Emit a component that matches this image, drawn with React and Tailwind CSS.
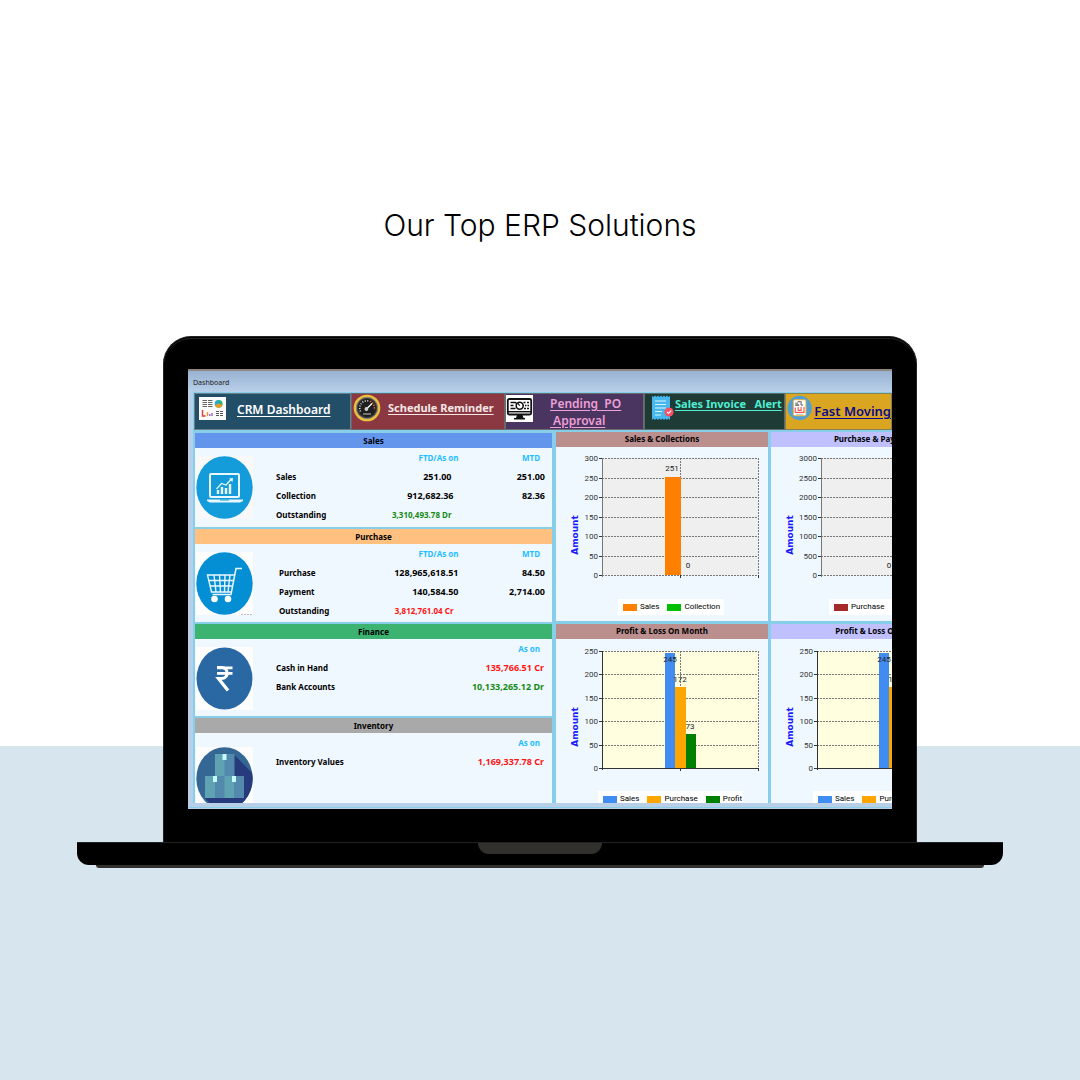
import React from "react";

const NOTO = "font-['Noto_Sans','Open_Sans',sans-serif]";

function ReportIcon() {
  return (
    <svg width="27" height="23" viewBox="0 0 27 23" aria-hidden="true">
      <rect width="27" height="23" fill="#fafafa" />
      <path d="M3.500 3.500h4.500M9 3.500h4.500M3.500 5.500h4.500M9 5.500h4.500M3.500 7.500h4.500M9 7.500h4.500M3.500 9.500h4.500M9 9.500h4.500" stroke="#666" strokeWidth="1" />
      <circle cx="19.700" cy="6.800" r="3.900" fill="#2bb673" />
      <path d="M19.700 6.800V2.900a3.900 3.900 0 0 0-3.700 5.200z" fill="#27a9e1" />
      <path d="M19.700 6.800L16 8a3.900 3.900 0 0 0 7.400 0z" fill="#f7941d" />
      <path d="M3.500 13v6h3" stroke="#e0393e" strokeWidth="1.400" fill="none" />
      <path d="M8.500 15v4" stroke="#f7941d" strokeWidth="1.500" />
      <path d="M10.800 17v2M13 16v3" stroke="#8a5bd0" strokeWidth="1.300" />
      <path d="M17 14.500h3M17 16.500h3M17 18.500h3M21 14.500h3M21 16.500h3M21 18.500h3" stroke="#555" strokeWidth="1.200" />
    </svg>
  );
}

function GaugeIcon() {
  return (
    <svg width="28" height="28" viewBox="0 0 28 28" aria-hidden="true">
      <circle cx="14" cy="14" r="13.300" fill="#edc23c" />
      <circle cx="14" cy="14" r="10.700" fill="#3a3a3a" stroke="#8b8473" strokeWidth="1" />
      <circle cx="14" cy="14" r="9" fill="#1f1f1f" />
      <path d="M7.500 17.500A7.400 7.400 0 0 1 16 7" fill="none" stroke="#ddd" strokeWidth="1.600" strokeDasharray="1 1.5" />
      <path d="M17 7.200a7.400 7.400 0 0 1 4.200 8.600" fill="none" stroke="#d9604a" strokeWidth="1.600" strokeDasharray="1.4 1.1" />
      <path d="M13 15.500L19 9.500" stroke="#fff" strokeWidth="1.300" />
      <circle cx="13.400" cy="15" r="1.900" fill="#cfcfcf" />
      <path d="M10 20h8" stroke="#aaa" strokeWidth="1.200" />
    </svg>
  );
}

function MonitorIcon() {
  return (
    <svg width="27" height="27" viewBox="0 0 27 27" aria-hidden="true">
      <rect width="27" height="27" fill="#fff" />
      <rect x="1.800" y="4" width="23.400" height="15.500" rx="1.500" fill="none" stroke="#111" strokeWidth="1.800" />
      <path d="M2 16.700h23" stroke="#111" strokeWidth="1.400" />
      <path d="M4.500 7.500h5l1.500 1.500M4.500 10.500h3M4.500 13.500h5M17.500 7.500h2M21 7.500h2M19 10.500h1.500M21.500 10.500h1.500M18 13.500h2M21 13.500h2" stroke="#111" strokeWidth="1.400" fill="none" />
      <circle cx="13.700" cy="10.700" r="3.500" fill="#fff" stroke="#111" strokeWidth="1.600" />
      <path d="M13.700 10.700l-2-2.500" stroke="#111" strokeWidth="1.200" />
      <path d="M11 20h5.500l1 3h-7.500z" fill="#111" />
      <path d="M8 23.700h11" stroke="#111" strokeWidth="1.600" />
    </svg>
  );
}

function InvoiceIcon() {
  return (
    <svg width="24" height="26" viewBox="0 0 24 26" aria-hidden="true">
      <path d="M1 1l1.500 1L4 .500 5.500 2 7 .500 8.500 2 10 .500 11.500 2 13 .500 14.500 2 16 .500 17.500 2 19 1v24l-1.500-1.500L16 25l-1.500-1.500L13 25l-1.500-1.500L10 25l-1.500-1.500L7 25l-1.500-1.500L4 25l-1.500-1.500L1 25z" fill="#46b8ee" />
      <path d="M4 6h11M4 9.500h11M4 13h11M4 16.500h7M4 20h6" stroke="#d9f3ff" strokeWidth="1.200" />
      <circle cx="18" cy="17" r="4.600" fill="#fb4f67" />
      <path d="M16 17l1.500 1.500 2.700-2.800" stroke="#fff" strokeWidth="1.200" fill="none" />
    </svg>
  );
}

function PageIcon() {
  return (
    <svg width="26" height="26" viewBox="0 0 26 26" aria-hidden="true">
      <circle cx="13" cy="13" r="12.500" fill="#4f9fd6" />
      <rect x="6.500" y="4.500" width="13" height="16.500" rx="1.500" fill="#fff" stroke="#f0b429" strokeWidth="1" />
      <path d="M11 6.500h3M14.500 6v4h2M8.500 8h3" stroke="#555" strokeWidth="1" fill="none" />
      <path d="M8.500 10h4" stroke="#333" strokeWidth="1.200" />
      <path d="M8.500 12.500v5h9v-5.500M11.500 12v3.500h3V12" stroke="#ee5a55" strokeWidth="1.200" fill="none" />
      <path d="M9 19.500h8" stroke="#bbb" strokeWidth="1" />
    </svg>
  );
}

function LaptopBadge() {
  return (
    <svg width="57" height="63" viewBox="0 0 57 63" aria-hidden="true">
      <rect width="57" height="63" fill="#f8f8f8" />
      <ellipse cx="28.500" cy="31.500" rx="28.200" ry="31.300" fill="#149bd9" />
      <rect x="14" y="18" width="29" height="23" rx="1" fill="none" stroke="#e9f7ff" strokeWidth="2" />
      <path d="M11 43.500h36v1.500l-3 1.500H14l-3-1.500z" fill="#e9f7ff" />
      <path d="M24 44h9" stroke="#149bd9" strokeWidth="1" />
      <path d="M22 38v-4M26 38v-7M30 38v-6M34 38V28" stroke="#e9f7ff" strokeWidth="2.400" />
      <path d="M20.500 33l5-5.500 4.500 1.500 5.500-6" stroke="#e9f7ff" strokeWidth="1.200" fill="none" />
      <path d="M33 22.500l4-.500-.500 4z" fill="#e9f7ff" />
    </svg>
  );
}

function CartBadge() {
  return (
    <svg width="57" height="63" viewBox="0 0 57 63" aria-hidden="true">
      <rect width="57" height="63" fill="#fdfdfd" />
      <ellipse cx="28.500" cy="31.500" rx="28.200" ry="31.300" fill="#048ed4" />
      <path d="M46 16.500h-6L35 42.500H16.500" stroke="#eaf7ff" strokeWidth="1.500" fill="none" />
      <path d="M38.500 23H11.500l4 17H35.500M12.500 28.500h25M14 34h22.500M18 23l2 17M23.500 23l1 17M29 23l-.5 17M34 23l-2 17" stroke="#eaf7ff" strokeWidth="1.400" fill="none" />
      <circle cx="18.500" cy="47" r="3.300" fill="#fff" />
      <circle cx="32" cy="47" r="3.300" fill="#fff" />
      <path d="M45 62.500h12" stroke="#bbb" strokeWidth="1" strokeDasharray="2 1" />
    </svg>
  );
}

function RupeeBadge() {
  return (
    <svg width="57" height="63" viewBox="0 0 57 63" aria-hidden="true">
      <rect width="57" height="63" fill="#fdfdfd" />
      <ellipse cx="28.500" cy="31.500" rx="28" ry="31" fill="#2968a3" />
      <path d="M21 20.800h15.500M21 26.300h15.500" stroke="#fff" strokeWidth="2.800" />
      <path d="M21 20.500h4.500c7.500 0 7.500 11 0 11h-3L32 43.500" stroke="#fff" strokeWidth="3.200" fill="none" />
    </svg>
  );
}

function BoxesBadge() {
  return (
    <svg width="57" height="63" viewBox="0 0 57 63" aria-hidden="true">
      <defs>
        <clipPath id="boxes-disc">
          <ellipse cx="28.500" cy="31.500" rx="28.200" ry="31.300" />
        </clipPath>
      </defs>
      <rect width="57" height="63" fill="#fdfdfd" />
      <g clipPath="url(#boxes-disc)">
        <rect width="57" height="63" fill="#356795" />
        <path d="M38.500 8L57 27v36H20L9 51z" fill="#263a7c" />
        <rect x="19" y="7" width="10" height="22" fill="#5fa3b3" />
        <rect x="28.500" y="7" width="10" height="22" fill="#5389ac" />
        <rect x="9" y="29" width="10" height="22" fill="#5fa3b3" />
        <rect x="19" y="29" width="10" height="22" fill="#5389ac" />
        <rect x="28.500" y="29" width="10" height="22" fill="#5fa3b3" />
        <rect x="38" y="29" width="10" height="22" fill="#5389ac" />
        <path d="M26.500 7h4v6h-4zM17 29h4v6h-4zM36 29h4v6h-4z" fill="#c5fbff" />
      </g>
    </svg>
  );
}

function Panel({ title, headClass, bodyClass, icon, iconClass, children }) {
  return (
    <section className="bg-[#f0f8ff]">
      <h2 className={`h-[15px] text-center text-[8px] leading-[15px] font-bold text-black ${headClass}`}>{title}</h2>
      <div className={`flex pr-[7px] pl-px ${bodyClass}`}>
        <div className={`mr-[22px] w-[58px] shrink-0 ${iconClass}`}>{icon}</div>
        {children}
      </div>
    </section>
  );
}

function Figures({ heads, rows, indent = "" }) {
  return (
    <table className="w-full table-fixed self-start text-[9px] leading-[19px] font-bold">
      <thead>
        <tr className="text-[8px] text-[#1fbdff]">
          <td className="w-[96px] p-0" />
          {heads.map((h) => (
            <th key={h} scope="col" className={`p-0 text-right font-bold whitespace-nowrap ${h === "FTD/As on" ? "" : "pr-[5px]"}`}>{h}</th>
          ))}
        </tr>
      </thead>
      <tbody>
        {rows.map((r) => (
          <tr key={r.label}>
            <th scope="row" className={`p-0 text-left text-[8px] font-bold whitespace-nowrap text-black ${indent}`}>{r.label}</th>
            {r.cells.map((c, i) => (
              <td key={i} className={`p-0 text-right whitespace-nowrap ${c.cls}`}>{c.v}</td>
            ))}
          </tr>
        ))}
      </tbody>
    </table>
  );
}

function Chart({ left, top, bottom, ticks, fill, solid, bars, labels, name }) {
  const right = 202;
  const mid = left + 78;
  const step = (bottom - top) / (ticks.length - 1);
  return (
    <svg width="212" height="152" viewBox="0 0 212 152" className="block font-['Roboto',sans-serif]" role="img" aria-label={name}>
      <rect x={left} y={top} width={right - left} height={bottom - top} fill={fill} />
      {ticks.map((t, i) => (
        <g key={t}>
          <path d={`M${left} ${Math.round(top + i * step) + 0.5}H${right}`} stroke="#777" strokeWidth="1" strokeDasharray="2 1" />
          <path d={`M${left - 3} ${Math.round(top + i * step) + 0.5}h3`} stroke="#333" strokeWidth="1" />
          <text x={left - 4} y={Math.round(top + i * step) + 3} textAnchor="end" fontSize="8" fill="#333">{t}</text>
        </g>
      ))}
      <path d={`M${mid + 0.5} ${top}V${bottom}M${right + 0.5} ${top}V${bottom}`} stroke="#777" strokeWidth="1" strokeDasharray="2 1" />
      <path d={`M${left + 0.5} ${top}V${bottom + 2}`} stroke={solid ? "#333" : "#777"} strokeWidth="1" />
      {solid && <path d={`M${left} ${bottom + 0.5}H${right}`} stroke="#333" strokeWidth="1" />}
      <path d={`M${mid + 0.5} ${bottom}v3M${right + 0.5} ${bottom}v3`} stroke="#333" strokeWidth="1" />
      {bars.map((b) => (
        <rect key={b.x} x={b.x} y={b.y} width={b.w} height={bottom - b.y} fill={b.c} />
      ))}
      {labels.map((l) => (
        <text key={l.x} x={l.x} y={l.y} textAnchor="middle" fontSize="8" fill="#222">{l.t}</text>
      ))}
      <text transform="translate(22 88) rotate(-90)" textAnchor="middle" fontSize="9" fontWeight="700" fill="#1a1aff" className="font-['DejaVu_Sans',sans-serif]">Amount</text>
    </svg>
  );
}

function Legend({ items, className }) {
  return (
    <ul className={`flex h-4 items-center gap-[8px] bg-white px-[5px] text-[8px] leading-4 whitespace-nowrap text-black ${className}`}>
      {items.map(([t, c]) => (
        <li key={t} className="flex items-center gap-[3px] font-['Roboto',sans-serif]">
          <span className={`h-[7px] w-[14px] ${c}`} />
          {t}
        </li>
      ))}
    </ul>
  );
}

function ChartPanel({ title, headClass, className, children }) {
  return (
    <section className={`overflow-hidden bg-[#f0f8ff] ${className}`}>
      <h2 className={`h-[15px] text-center text-[8px] leading-[14px] font-bold text-black ${headClass}`}>{title}</h2>
      {children}
    </section>
  );
}

const monthTicks = [250, 200, 150, 100, 50, 0];
const monthLegend = [["Sales", "bg-[#418cf0]"], ["Purchase", "bg-[#ffa500]"], ["Profit", "bg-[#008000]"]];

function Dashboard() {
  return (
    <div className={`h-[440px] overflow-hidden border-t-2 border-[#8d8681] bg-[#b9cfe8] ${NOTO}`}>
      <div className="h-[21px] bg-linear-to-b from-[#98b2d0] to-[#b9d0ea] pt-1 pl-[5px] text-[7px] leading-4 text-[#222]">Dashboard</div>
      <div className="ml-[5px] h-[411px] overflow-hidden bg-[#87ceeb] pt-px pl-px">
        <nav className="grid h-9 grid-cols-[157px_154px_139px_141px_minmax(106px,1fr)] font-semibold whitespace-nowrap">
          <a href="#crm" className="flex items-start gap-[11px] border border-[#6c7f88] bg-[#234e68] pt-[3px] pl-[4px] text-[12px] leading-[26px] text-white underline underline-offset-2"><ReportIcon />CRM Dashboard</a>
          <a href="#schedule" className="flex items-start gap-[7px] border border-[#6c6468] bg-[#8b3842] pl-px text-[11px] leading-[28px] font-bold text-[#f5e6e6] underline underline-offset-2"><GaugeIcon />Schedule Reminder</a>
          <a href="#pending" className="flex items-start gap-[17px] border border-[#6c6c70] bg-[#493560] pt-px text-[12px] leading-[17px] text-[#ee9fd6] underline underline-offset-2"><MonitorIcon /><span className="whitespace-pre">{"Pending  PO\n Approval"}</span></a>
          <a href="#invoice" className="flex items-start border border-[#5c6c6a] bg-[#1f3b36] pt-px pl-[6px] text-[11px] leading-[18px] font-bold text-[#4eeed2] underline underline-offset-2"><InvoiceIcon /><span className="whitespace-pre">{"Sales Invoice   Alert"}</span></a>
          <a href="#fast" className="flex items-start gap-[2px] border border-[#8c8050] bg-[#daa520] pt-px pl-px text-[13px] leading-[32px] text-[#0b0b8c] underline underline-offset-2"><PageIcon />Fast Moving</a>
        </nav>
        <div className="mt-[3px] grid h-[371px] grid-cols-[minmax(359px,1fr)_212px_212px] items-start gap-x-[3px] overflow-hidden">
          <div className="flex flex-col gap-[2px] pt-px pr-px pl-px">
            <Panel title="Sales" headClass="bg-[#6495ed]" bodyClass="h-[79px]" icon={<LaptopBadge />} iconClass="pt-[8px]">
              <Figures heads={["FTD/As on", "MTD"]} rows={[
                { label: "Sales", cells: [{ v: "251.00", cls: "pr-[7px]" }, { v: "251.00", cls: "" }] },
                { label: "Collection", cells: [{ v: "912,682.36", cls: "pr-[5px]" }, { v: "82.36", cls: "" }] },
                { label: "Outstanding", cells: [{ v: "3,310,493.78 Dr", cls: "pr-[7px] text-[8px] text-[#148a14]" }, { v: "", cls: "" }] },
              ]} />
            </Panel>
            <Panel title="Purchase" headClass="bg-[#ffc080]" bodyClass="h-[78px]" icon={<CartBadge />} iconClass="pt-[8px]">
              <Figures indent="pl-[3px]" heads={["FTD/As on", "MTD"]} rows={[
                { label: "Purchase", cells: [{ v: "128,965,618.51", cls: "" }, { v: "84.50", cls: "" }] },
                { label: "Payment", cells: [{ v: "140,584.50", cls: "" }, { v: "2,714.00", cls: "" }] },
                { label: "Outstanding", cells: [{ v: "3,812,761.04 Cr", cls: "pr-[5px] text-[8px] text-[#ff1414]" }, { v: "", cls: "" }] },
              ]} />
            </Panel>
            <Panel title="Finance" headClass="bg-[#3cb371]" bodyClass="h-[77px]" icon={<RupeeBadge />} iconClass="pt-[8px]">
              <Figures heads={["As on"]} rows={[
                { label: "Cash in Hand", cells: [{ v: "135,766.51 Cr", cls: "pr-px text-[#ff1414]" }] },
                { label: "Bank Accounts", cells: [{ v: "10,133,265.12 Dr", cls: "pr-px text-[#148a14]" }] },
              ]} />
            </Panel>
            <Panel title="Inventory" headClass="bg-[#a9a9a9]" bodyClass="h-[76px]" icon={<BoxesBadge />} iconClass="pt-[14px]">
              <Figures heads={["As on"]} rows={[
                { label: "Inventory Values", cells: [{ v: "1,169,337.78 Cr", cls: "pr-px text-[#ff1414]" }] },
              ]} />
            </Panel>
          </div>
          <div className="flex flex-col gap-[3px]">
            <ChartPanel title="Sales & Collections" headClass="bg-[#bc8f8f]" className="h-[189px]">
              <Chart name="Sales and collections" left={46} top={11} bottom={128} ticks={[300, 250, 200, 150, 100, 50, 0]} fill="#efefef"
                bars={[{ x: 109, y: 30, w: 16, c: "#ff8000" }]} labels={[{ x: 116, y: 24, t: "251" }, { x: 132, y: 121, t: "0" }]} />
              <Legend className="mr-[44px] ml-[62px]" items={[["Sales", "bg-[#ff8000]"], ["Collection", "bg-[#00c000]"]]} />
            </ChartPanel>
            <ChartPanel title="Profit & Loss On Month" headClass="bg-[#bc8f8f]" className="h-[180px]">
              <Chart name="Profit and loss on month" left={46} top={12} bottom={129} ticks={monthTicks} fill="#ffffe0" solid
                bars={[{ x: 109, y: 14, w: 10, c: "#418cf0" }, { x: 119, y: 48, w: 11, c: "#ffa500" }, { x: 130, y: 95, w: 10, c: "#008000" }]}
                labels={[{ x: 114, y: 23, t: "245" }, { x: 124, y: 43, t: "172" }, { x: 134, y: 90, t: "73" }]} />
              <Legend className="mr-[25px] ml-[42px]" items={monthLegend} />
            </ChartPanel>
          </div>
          <div className="flex flex-col gap-[3px]">
            <ChartPanel title="Purchase & Payments" headClass="bg-[#c0c0ff]" className="h-[189px]">
              <Chart name="Purchase and payments" left={50} top={11} bottom={128} ticks={[3000, 2500, 2000, 1500, 1000, 500, 0]} fill="#efefef"
                bars={[]} labels={[{ x: 118, y: 121, t: "0" }]} />
              <Legend className="mr-[30px] ml-[58px]" items={[["Purchase", "bg-[#a52a2a]"], ["Payment", "bg-[#1e90ff]"]]} />
            </ChartPanel>
            <ChartPanel title="Profit & Loss On Year" headClass="bg-[#c0c0ff]" className="h-[180px]">
              <Chart name="Profit and loss on year" left={46} top={12} bottom={129} ticks={monthTicks} fill="#ffffe0" solid
                bars={[{ x: 108, y: 14, w: 10, c: "#418cf0" }, { x: 118, y: 48, w: 11, c: "#ffa500" }, { x: 129, y: 95, w: 10, c: "#008000" }]}
                labels={[{ x: 113, y: 23, t: "245" }, { x: 124, y: 43, t: "172" }, { x: 134, y: 90, t: "73" }]} />
              <Legend className="mr-[25px] ml-[42px]" items={monthLegend} />
            </ChartPanel>
          </div>
        </div>
      </div>
      <div className="h-[5px] border-b border-[#87ceeb] bg-[#b9cfe8]" />
    </div>
  );
}

export default function App() {
  return (
    <main className="min-h-screen bg-[linear-gradient(to_bottom,#ffffff_746px,#d7e5ef_746px)] px-[77px] pt-[205px] pb-10">
      <h1 className="text-center font-['Inter',sans-serif] text-[30px] leading-10 font-light text-black">Our Top ERP Solutions</h1>
      <div className="mx-[86px] mt-[91px] rounded-t-[28px] border border-b-0 border-[#222] bg-black p-px">
        <div className="rounded-t-[26px] border-t border-[#222] px-[23px] pt-[30px] pb-[32px]">
          <Dashboard />
        </div>
      </div>
      <div className="flex h-[23px] items-start justify-center rounded-b-xl border-t border-[#222] bg-black">
        <div className="h-[11px] w-[124px] rounded-b-xl bg-[#31302c]" />
      </div>
      <div className="mx-[19px] h-[3px] rounded-b-sm bg-[#33312e]" />
    </main>
  );
}
